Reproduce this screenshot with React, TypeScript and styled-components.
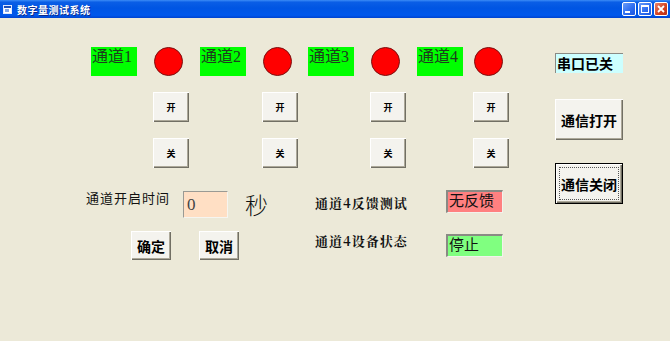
import styled, { createGlobalStyle } from 'styled-components';

const GlobalStyle = createGlobalStyle`
  html, body {
    margin: 0;
    padding: 0;
    background: #ece9d8;
  }
  body {
    font-family: "Liberation Serif", "Noto Sans CJK SC", serif;
  }
`;

const channels = [
  { name: '通道1', width: 109, offset: 63 },
  { name: '通道2', width: 108, offset: 63 },
  { name: '通道3', width: 109, offset: 63 },
  { name: '通道4', width: 60, offset: 57 },
];

const App = () => {
  return (
    <Window>
      <GlobalStyle />
      <TitleBar>
        <AppIcon width="9" height="9" viewBox="0 0 9 9">
          <rect x="0.5" y="0.5" width="8" height="8" fill="#fff" stroke="#dfe8ff" />
          <rect x="1" y="1" width="7" height="2" fill="#1c4fb8" />
          <rect x="2" y="4" width="4" height="3" fill="#7fa4e8" />
        </AppIcon>
        <TitleText>数字量测试系统</TitleText>
        <TitleButtons>
          <CaptionButton>
            <svg width="14" height="14" viewBox="0 0 14 14">
              <rect x="3" y="9" width="5" height="2" fill="#fff" />
            </svg>
          </CaptionButton>
          <CaptionButton>
            <svg width="14" height="14" viewBox="0 0 14 14">
              <rect x="3.5" y="3.5" width="7" height="7" fill="none" stroke="#fff" />
              <rect x="3" y="3" width="8" height="2" fill="#fff" />
            </svg>
          </CaptionButton>
          <CaptionButton $close>
            <svg width="14" height="14" viewBox="0 0 14 14">
              <path d="M4 4 L10 10 M10 4 L4 10" stroke="#fff" strokeWidth="1.8" />
            </svg>
          </CaptionButton>
        </TitleButtons>
      </TitleBar>

      <Body>
        <Main>
          <ChannelRow>
            {channels.map((c) => (
              <ChannelGroup key={c.name} $width={c.width}>
                <LampLine>
                  <ChannelLabel>{c.name}</ChannelLabel>
                  <Lamp $offset={c.offset - 46} />
                </LampLine>
                <SmallButton $offset={c.offset - 1} $top={16}>开</SmallButton>
                <SmallButton $offset={c.offset - 1} $top={16}>关</SmallButton>
              </ChannelGroup>
            ))}
          </ChannelRow>

          <BottomRow>
            <TimeForm>
              <TimeLine>
                <Caption>通道开启时间</Caption>
                <TimeInput>0</TimeInput>
                <Unit>秒</Unit>
              </TimeLine>
              <ButtonLine>
                <FormButton>确定</FormButton>
                <FormButton>取消</FormButton>
              </ButtonLine>
            </TimeForm>

            <StatusPanel>
              <StatusCaption $drop={6}>通道4反馈测试</StatusCaption>
              <StatusBox $color="#ff8080">无反馈</StatusBox>
              <StatusCaption $drop={0}>通道4设备状态</StatusCaption>
              <StatusBox $color="#80ff80">停止</StatusBox>
            </StatusPanel>
          </BottomRow>
        </Main>

        <Side>
          <PortStatus>串口已关</PortStatus>
          <CommButton $top={26}>通信打开</CommButton>
          <CommButton $top={23} $default>
            <FocusRing>通信关闭</FocusRing>
          </CommButton>
        </Side>
      </Body>
    </Window>
  );
};

const Window = styled.div`
  width: 670px;
  height: 341px;
  background: #ece9d8;
  display: flex;
  flex-direction: column;
  overflow: hidden;
`;

const TitleBar = styled.div`
  height: 18px;
  display: flex;
  align-items: center;
  padding: 0 2px 0 3px;
  background: linear-gradient(
    #3c8cf6 0%,
    #0a5ee6 12%,
    #0055e3 45%,
    #0058ec 85%,
    #0043cf 100%
  );
`;

const AppIcon = styled.svg`
  flex: none;
`;

const TitleText = styled.div`
  margin-left: 5px;
  font-family: "Noto Sans CJK SC", sans-serif;
  font-size: 10px;
  font-weight: 700;
  color: #fff;
  letter-spacing: 0.5px;
  text-shadow: 1px 1px 0 #0a2a8a;
  flex: 1;
`;

const TitleButtons = styled.div`
  display: flex;
  gap: 2px;
`;

type CaptionProps = { $close?: boolean };
const CaptionButton = styled.div<CaptionProps>`
  width: 14px;
  height: 14px;
  border: 1px solid #fff;
  border-radius: 2px;
  box-sizing: border-box;
  display: flex;
  align-items: center;
  justify-content: center;
  background: ${({ $close }) =>
    $close
      ? 'linear-gradient(135deg, #e7826a, #d3401f 60%, #b7301a)'
      : 'linear-gradient(135deg, #6a9cf8, #2b6bf0 60%, #1d55de)'};
  svg {
    flex: none;
  }
`;

const Body = styled.div`
  flex: 1;
  display: flex;
`;

const Main = styled.div`
  width: 555px;
  display: flex;
  flex-direction: column;
`;

const ChannelRow = styled.div`
  display: flex;
  margin-top: 29px;
  margin-left: 91px;
`;

type GroupProps = { $width: number };
const ChannelGroup = styled.div<GroupProps>`
  width: ${({ $width }) => $width}px;
  flex: none;
  display: flex;
  flex-direction: column;
`;

const LampLine = styled.div`
  display: flex;
  height: 29px;
`;

const ChannelLabel = styled.div`
  width: 46px;
  height: 29px;
  flex: none;
  background: #00ff00;
  color: #1d3d1d;
  font-size: 16px;
  line-height: 18px;
  padding: 1px 0 0 1px;
  box-sizing: border-box;
  white-space: nowrap;
  overflow: hidden;
`;

type LampProps = { $offset: number };
const Lamp = styled.div<LampProps>`
  width: 29px;
  height: 29px;
  margin-left: ${({ $offset }) => $offset}px;
  flex: none;
  box-sizing: border-box;
  border-radius: 50%;
  background: #ff0000;
  border: 1px solid #7a1010;
`;

const buttonFace = `
  background: #f4f3ee;
  border: none;
  box-sizing: border-box;
  box-shadow: inset 1px 1px 0 #ffffff, inset -1px -1px 0 #716f64, inset -2px -2px 0 #aca899;
  color: #000;
  font-family: "Noto Sans CJK SC", sans-serif;
  font-weight: 700;
  display: flex;
  align-items: center;
  justify-content: center;
`;

type SmallButtonProps = { $offset: number; $top: number };
const SmallButton = styled.div<SmallButtonProps>`
  ${buttonFace}
  width: 36px;
  height: 30px;
  margin-left: ${({ $offset }) => $offset}px;
  margin-top: ${({ $top }) => $top}px;
  font-size: 9px;
`;

const BottomRow = styled.div`
  display: flex;
  margin-top: 23px;
  padding-left: 86px;
`;

const TimeForm = styled.div`
  width: 229px;
  flex: none;
  display: flex;
  flex-direction: column;
`;

const TimeLine = styled.div`
  display: flex;
  align-items: flex-start;
  height: 27px;
`;

const Caption = styled.div`
  width: 84px;
  font-family: "Noto Sans CJK SC", sans-serif;
  font-size: 13px;
  line-height: 14px;
  letter-spacing: 1px;
  white-space: nowrap;
  color: #111;
`;

const TimeInput = styled.div`
  width: 45px;
  height: 27px;
  margin-left: 13px;
  box-sizing: border-box;
  background: #ffdfc4;
  border-top: 1px solid #9a9a94;
  border-left: 1px solid #9a9a94;
  border-right: 1px solid #f6f5f0;
  border-bottom: 1px solid #f6f5f0;
  font-size: 17px;
  line-height: 25px;
  padding-left: 3px;
  color: #444;
`;

const Unit = styled.div`
  margin-left: 17px;
  font-family: "Noto Sans CJK SC", sans-serif;
  font-size: 23px;
  line-height: 26px;
  font-weight: 300;
  color: #111;
`;

const ButtonLine = styled.div`
  display: flex;
  gap: 28px;
  margin-top: 13px;
  padding-left: 45px;
`;

const FormButton = styled.div`
  ${buttonFace}
  width: 40px;
  height: 29px;
  font-size: 14px;
`;

const StatusPanel = styled.div`
  display: grid;
  grid-template-columns: 131px 57px;
  row-gap: 17px;
  margin-top: -1px;
`;

type StatusCaptionProps = { $drop: number };
const StatusCaption = styled.div<StatusCaptionProps>`
  font-family: "Noto Serif CJK SC", "Noto Sans CJK SC", serif;
  font-size: 13px;
  font-weight: 700;
  letter-spacing: 1px;
  line-height: 14px;
  padding-top: ${({ $drop }) => $drop}px;
  white-space: nowrap;
  color: #111;
`;

type StatusBoxProps = { $color: string };
const StatusBox = styled.div<StatusBoxProps>`
  height: 23px;
  box-sizing: border-box;
  background: ${({ $color }) => $color};
  border-top: 2px solid #8a8a84;
  border-left: 2px solid #8a8a84;
  border-right: 1px solid #f3f2ec;
  border-bottom: 1px solid #f3f2ec;
  font-size: 15px;
  line-height: 19px;
  padding-left: 1px;
  color: #111;
  white-space: nowrap;
`;

const Side = styled.div`
  display: flex;
  flex-direction: column;
  padding-top: 35px;
`;

const PortStatus = styled.div`
  width: 68px;
  height: 20px;
  box-sizing: border-box;
  background: #ccffff;
  border-top: 1px solid #8a8a84;
  border-left: 1px solid #8a8a84;
  font-family: "Noto Sans CJK SC", sans-serif;
  font-size: 14px;
  font-weight: 700;
  line-height: 18px;
  padding-left: 1px;
  color: #000;
`;

type CommButtonProps = { $top: number; $default?: boolean };
const CommButton = styled.div<CommButtonProps>`
  ${buttonFace}
  width: 68px;
  height: 41px;
  margin-top: ${({ $top }) => $top}px;
  font-size: 14px;
  ${({ $default }) =>
    $default &&
    `
    border: 1px solid #000;
  `}
`;

const FocusRing = styled.div`
  width: 60px;
  height: 33px;
  box-sizing: border-box;
  border: 1px dotted #555;
  display: flex;
  align-items: center;
  justify-content: center;
`;

export default App;
